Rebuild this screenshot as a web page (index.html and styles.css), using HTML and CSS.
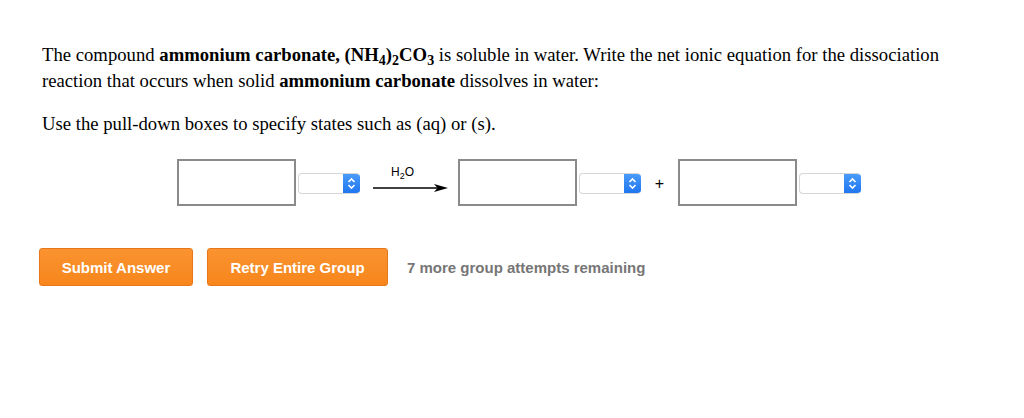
FILE: index.html
```html
<!DOCTYPE html>
<html>
<head>
    <title>Ammonium carbonate</title>
    <link rel="stylesheet" href="styles.css">
</head>
<body>
    <div class="question">
        <p class="prompt">The compound <b>ammonium carbonate, (NH<sub>4</sub>)<sub>2</sub>CO<sub>3</sub></b> is soluble in water. Write the net ionic equation for the dissociation reaction that occurs when solid <b>ammonium carbonate</b> dissolves in water:</p>
        <p class="prompt hint">Use the pull-down boxes to specify states such as (aq) or (s).</p>

        <div class="equation">
            <input type="text" class="species">
            <div class="state"><span class="knob"><svg width="9" height="13" viewBox="0 0 9 13"><path d="M1.5 5 L4.5 2 L7.5 5 M1.5 8 L4.5 11 L7.5 8" fill="none" stroke="#fff" stroke-width="1.6"/></svg></span></div>
            <div class="arrow">
                <span class="solvent">H<sub>2</sub>O</span>
                <svg width="75" height="8" viewBox="0 0 75 8"><line x1="0" y1="4" x2="68" y2="4" stroke="#000" stroke-width="1.3"/><path d="M61 0 L75 4 L61 8 L64.5 4 Z" fill="#000"/></svg>
            </div>
            <input type="text" class="species">
            <div class="state"><span class="knob"><svg width="9" height="13" viewBox="0 0 9 13"><path d="M1.5 5 L4.5 2 L7.5 5 M1.5 8 L4.5 11 L7.5 8" fill="none" stroke="#fff" stroke-width="1.6"/></svg></span></div>
            <span class="plus">+</span>
            <input type="text" class="species">
            <div class="state"><span class="knob"><svg width="9" height="13" viewBox="0 0 9 13"><path d="M1.5 5 L4.5 2 L7.5 5 M1.5 8 L4.5 11 L7.5 8" fill="none" stroke="#fff" stroke-width="1.6"/></svg></span></div>
        </div>

        <div class="actions">
            <button class="btn submit">Submit Answer</button>
            <button class="btn retry">Retry Entire Group</button>
            <span class="attempts">7 more group attempts remaining</span>
        </div>
    </div>
</body>
</html>
```
FILE: styles.css
```css
body {
    margin: 0;
    background: #fff;
    font-family: "Liberation Serif", "Times New Roman", serif;
    color: #000;
}
.question {
    padding: 42px 0 0 42px;
}
.prompt {
    margin: 0;
    width: 920px;
    font-size: 18.7px;
    line-height: 26px;
}
.prompt sub {
    font-size: 14px;
    line-height: 0;
    vertical-align: -4px;
}
.hint {
    margin-top: 17px;
}
.equation {
    display: flex;
    align-items: center;
    margin: 22px 0 0 135px;
    height: 47px;
}
.species {
    width: 119px;
    height: 47px;
    box-sizing: border-box;
    border: 2px solid #8a8a8a;
    border-radius: 0;
    background: #fff;
    margin: 0;
    padding: 0;
}
.state {
    display: flex;
    justify-content: flex-end;
    width: 62px;
    height: 21px;
    box-sizing: border-box;
    margin-left: 2px;
    margin-top: 2px;
    border: 1px solid #d6d6d6;
    border-right: none;
    border-radius: 4px;
    background: #fff;
    overflow: hidden;
}
.knob {
    display: flex;
    align-items: center;
    justify-content: center;
    width: 17px;
    height: 100%;
    background: linear-gradient(#4a9bfa, #1f76f0);
}
.arrow {
    display: flex;
    flex-direction: column;
    align-items: center;
    align-self: flex-start;
    width: 75px;
    margin: 6px 10px 0 13px;
}
.solvent {
    font-family: "Liberation Sans", Arial, sans-serif;
    font-size: 12px;
    line-height: 14px;
    margin-bottom: 5px;
    margin-left: -16px;
}
.solvent sub {
    font-size: 9px;
    line-height: 0;
}
.plus {
    font-family: "Liberation Sans", Arial, sans-serif;
    font-size: 16px;
    width: 37px;
    text-align: center;
    margin-top: 2px;
}
.actions {
    display: flex;
    align-items: center;
    margin: 42px 0 0 -3px;
}
.btn {
    height: 38px;
    border: 1px solid #e8771a;
    border-radius: 3px;
    background: linear-gradient(#fa9330, #f7861c);
    color: #fff;
    font-family: "Liberation Sans", Arial, sans-serif;
    font-weight: bold;
    font-size: 15px;
    cursor: pointer;
    box-shadow: 0 1px 1px rgba(0,0,0,0.08);
}
.submit {
    width: 154px;
}
.retry {
    width: 181px;
    margin-left: 14px;
}
.attempts {
    margin-left: 19px;
    font-family: "Liberation Sans", Arial, sans-serif;
    font-weight: bold;
    font-size: 15px;
    color: #767676;
}
```
